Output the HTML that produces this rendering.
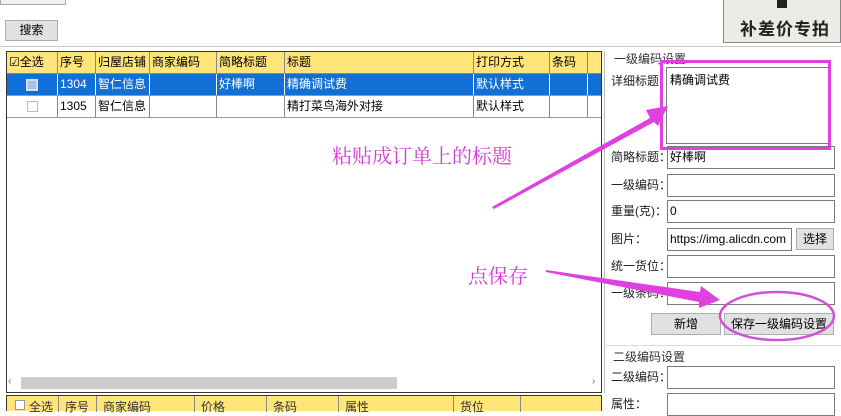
<!DOCTYPE html><html><head><meta charset="utf-8"><style>
*{margin:0;padding:0;box-sizing:border-box}
body{width:841px;height:411px;background:#fff;position:relative;overflow:hidden;font-family:"Liberation Sans","Noto Sans CJK SC",sans-serif;font-size:12px;color:#000}
.a{position:absolute}
.btn{position:absolute;background:#e1e1e1;border:1px solid #adadad;text-align:center;font-size:12px}
.inp{position:absolute;background:#fff;border:1px solid #7a7a7a;height:23px;left:667px;width:168px;padding:0 2px;line-height:21px;font-size:12px}
.lbl{position:absolute;left:611px;font-size:12px;color:#222;height:23px;line-height:23px}
.c{position:absolute;top:0;height:100%;border-right:1px solid #888;padding:0 2px;line-height:21px;white-space:nowrap;overflow:hidden}
.row{position:absolute;left:7px;width:594px;height:22px;border-bottom:1px solid #999}
</style></head><body>
<div class="a" style="left:0;top:0;width:66px;height:5px;border:1px solid #aaa;border-top:none;background:#f0f0f0"></div>
<div class="btn" style="left:5px;top:20px;width:53px;height:21px;line-height:19px">搜索</div>
<div class="a" style="left:723px;top:0;width:118px;height:43px;background:#ecebe6;border:1px solid #888;border-top:none;"></div>
<div class="a" style="left:777px;top:0;width:10px;height:8px;background:#222"></div>
<div class="a" style="left:740px;top:15px;font-size:17px;font-weight:bold;color:#222;letter-spacing:1px">补差价专拍</div>
<div class="a" style="left:0;top:46px;width:841px;height:1px;background:#c8c8c8"></div>
<div class="a" style="left:6px;top:51px;width:596px;height:342px;border:1px solid #333;background:#fff"></div>
<div class="row" style="top:52px;background:#ffe57a;border-bottom:1px solid #888">
<div class="c" style="left:0;width:51px">☑全选</div><div class="c" style="left:51px;width:38px">序号</div><div class="c" style="left:89px;width:54px">归屋店铺</div><div class="c" style="left:143px;width:67px">商家编码</div><div class="c" style="left:210px;width:68px">简略标题</div><div class="c" style="left:278px;width:189px">标题</div><div class="c" style="left:467px;width:76px">打印方式</div><div class="c" style="left:543px;width:38px">条码</div></div>
<div class="row" style="top:74px;background:#1170d8;color:#fff">
<div class="c" style="left:0;width:51px;border-color:#fff"><span style="display:inline-block;width:12px;height:12px;border:2px solid #ddd;background:#9cc5f0;margin-left:17px;vertical-align:middle"></span></div><div class="c" style="left:51px;width:38px;border-color:#fff">1304</div><div class="c" style="left:89px;width:54px;border-color:#fff">智仁信息</div><div class="c" style="left:143px;width:67px;border-color:#fff"></div><div class="c" style="left:210px;width:68px;border-color:#fff">好棒啊</div><div class="c" style="left:278px;width:189px;border-color:#fff">精确调试费</div><div class="c" style="left:467px;width:76px;border-color:#fff">默认样式</div><div class="c" style="left:543px;width:38px;border-color:#fff"></div></div>
<div class="row" style="top:96px;">
<div class="c" style="left:0;width:51px"><span style="display:inline-block;width:11px;height:11px;border:1px solid #bbb;margin-left:18px;vertical-align:middle"></span></div><div class="c" style="left:51px;width:38px">1305</div><div class="c" style="left:89px;width:54px">智仁信息</div><div class="c" style="left:143px;width:67px"></div><div class="c" style="left:210px;width:68px"></div><div class="c" style="left:278px;width:189px">精打菜鸟海外对接</div><div class="c" style="left:467px;width:76px">默认样式</div><div class="c" style="left:543px;width:38px"></div></div>
<div class="a" style="left:8px;top:376px;font-size:10px;color:#666">‹</div>
<div class="a" style="left:21px;top:377px;width:376px;height:12px;background:#cdcdcd"></div>
<div class="a" style="left:592px;top:376px;font-size:10px;color:#666">›</div>
<div class="a" style="left:6px;top:395px;width:596px;height:16px;border:1px solid #333;border-bottom:none;background:#ffe57a;font-size:12px;color:#333">
<span class="a" style="left:8px;top:4px;width:10px;height:10px;border:1px solid #999;background:#fff"></span>
<span class="a" style="left:22px;top:2px">全选</span><span class="a" style="left:51px;top:0;height:16px;border-left:1px solid #888"></span>
<span class="a" style="left:58px;top:2px">序号</span><span class="a" style="left:89px;top:0;height:16px;border-left:1px solid #888"></span>
<span class="a" style="left:96px;top:2px">商家编码</span><span class="a" style="left:187px;top:0;height:16px;border-left:1px solid #888"></span>
<span class="a" style="left:194px;top:2px">价格</span><span class="a" style="left:259px;top:0;height:16px;border-left:1px solid #888"></span>
<span class="a" style="left:266px;top:2px">条码</span><span class="a" style="left:331px;top:0;height:16px;border-left:1px solid #888"></span>
<span class="a" style="left:338px;top:2px">属性</span><span class="a" style="left:446px;top:0;height:16px;border-left:1px solid #888"></span>
<span class="a" style="left:453px;top:2px">货位</span><span class="a" style="left:513px;top:0;height:16px;border-left:1px solid #888"></span>
</div>
<div class="a" style="left:604px;top:51px;width:1px;height:342px;background:#bbb"></div>
<div class="a" style="left:614px;top:50px;color:#333">一级编码设置</div>
<div class="lbl" style="top:70px">详细标题：</div>
<div class="a" style="left:666px;top:67px;width:164px;height:77px;border:1px solid #7a7a7a;padding:3px 3px;font-size:12px">精确调试费</div>
<div class="lbl" style="top:146px">简略标题：</div><div class="inp" style="top:146px">好棒啊</div>
<div class="lbl" style="top:174px">一级编码：</div><div class="inp" style="top:174px"></div>
<div class="lbl" style="top:200px">重量(克)：</div><div class="inp" style="top:200px">0</div>
<div class="lbl" style="top:228px">图片：</div><div class="inp" style="top:228px;width:125px;overflow:hidden;white-space:nowrap">https://img.alicdn.com</div>
<div class="btn" style="left:796px;top:228px;width:38px;height:22px;line-height:20px">选择</div>
<div class="lbl" style="top:255px">统一货位：</div><div class="inp" style="top:255px"></div>
<div class="lbl" style="top:282px">一级条码：</div><div class="inp" style="top:282px"></div>
<div class="btn" style="left:651px;top:313px;width:70px;height:22px;line-height:20px">新增</div>
<div class="btn" style="left:724px;top:313px;width:110px;height:22px;line-height:20px">保存一级编码设置</div>
<div class="a" style="left:604px;top:345px;width:237px;height:1px;background:#ddd"></div>
<div class="a" style="left:613px;top:348px;color:#333">二级编码设置</div>
<div class="lbl" style="top:366px">二级编码：</div><div class="inp" style="top:366px"></div>
<div class="lbl" style="top:393px">属性：</div><div class="inp" style="top:393px"></div>
<div class="a" style="left:332px;top:140px;font-family:'Noto Serif CJK SC',serif;font-size:20px;color:#d63ad6">粘贴成订单上的标题</div>
<div class="a" style="left:468px;top:260px;font-family:'Noto Serif CJK SC',serif;font-size:20px;color:#d63ad6">点保存</div>
<svg class="a" style="left:0;top:0" width="841" height="411">
<rect x="661.5" y="61.5" width="168" height="87" fill="none" stroke="#e040e0" stroke-width="3"/>
<polygon points="492,207 650,118 646,110 668,106 658,126 654,122 494,209" fill="#e040e0"/>
<polygon points="546,270 700,292 701,286 720,300 699,308 699,302 546,272" fill="#e040e0"/>
<ellipse cx="777" cy="316" rx="57" ry="24" fill="none" stroke="#d050d8" stroke-width="2.5"/>
</svg>
</body></html>
